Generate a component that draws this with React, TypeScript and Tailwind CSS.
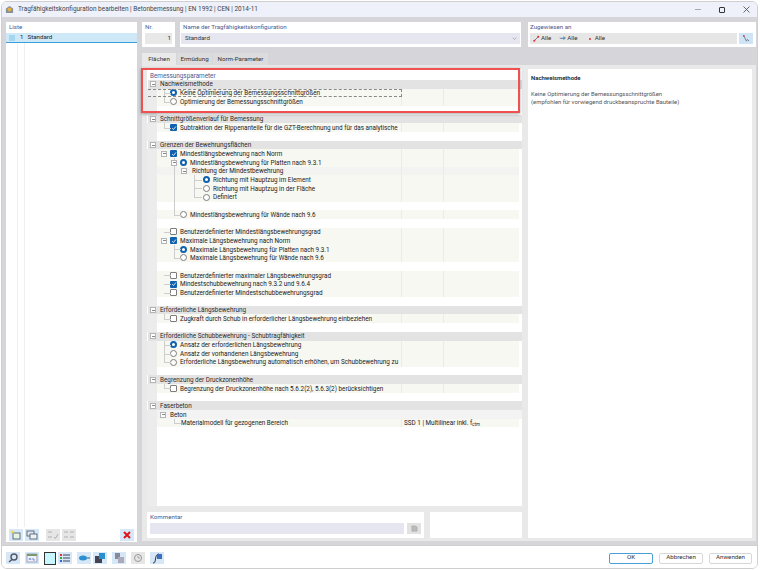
import type { ReactNode } from "react";

const V163 = "absolute left-[17px] top-0 bottom-0 w-px bg-[#cdcdcd]";
const V163Half = "absolute left-[17px] top-0 h-1/2 w-px bg-[#cdcdcd]";
const H163 = "absolute left-[17px] top-1/2 w-[7px] h-px bg-[#cdcdcd]";
const V173 = "absolute left-[27px] top-0 bottom-0 w-px bg-[#cdcdcd]";
const V173Half = "absolute left-[27px] top-0 h-1/2 w-px bg-[#cdcdcd]";
const H173 = "absolute left-[27px] top-1/2 w-[7px] h-px bg-[#cdcdcd]";
const V193 = "absolute left-[47px] top-0 bottom-0 w-px bg-[#cdcdcd]";
const V193Half = "absolute left-[47px] top-0 h-1/2 w-px bg-[#cdcdcd]";
const H193 = "absolute left-[47px] top-1/2 w-[8px] h-px bg-[#cdcdcd]";

const L1 = "pl-[13px]";
const L2 = "pl-[23px]";
const L3 = "pl-[35px]";
const L4 = "pl-[46px]";

function Radio({ on }: { on?: boolean }) {
  return on ? (
    <span className="mr-[3px] block size-[7px] shrink-0 rounded-full border-[2px] border-[#0f62b0] bg-white" />
  ) : (
    <span className="mr-[3px] block size-[7px] shrink-0 rounded-full border border-[#7d7d7d] bg-white" />
  );
}

function Check({ on }: { on?: boolean }) {
  return on ? (
    <span className="mr-[3px] flex size-[7px] shrink-0 items-center justify-center rounded-[1px] bg-[#0f62b0]">
      <svg viewBox="0 0 8 8" className="size-[6px]" fill="none" stroke="#fff" strokeWidth="1.1">
        <path d="M1.5 4.2 3.3 6 6.5 2" />
      </svg>
    </span>
  ) : (
    <span className="mr-[3px] block size-[7px] shrink-0 rounded-[1px] border border-[#7d7d7d] bg-white" />
  );
}

function Expander({ pos }: { pos: string }) {
  return (
    <span className={`absolute top-[1.5px] flex size-[6px] items-center justify-center border border-[#b4b4b4] bg-white ${pos}`}>
      <span className="block h-px w-[3px] bg-[#888]" />
    </span>
  );
}

function Section({ text, blue }: { text: string; blue?: boolean }) {
  if (blue) {
    return (
      <div className="flex h-[8.7px] items-center bg-white pl-[3px] text-[#4a5b8f]">
        <span className="translate-y-[0.8px]">{text}</span>
      </div>
    );
  }
  return (
    <div className="relative ml-[1px] flex h-[8.7px] items-center bg-[#e3e3e3] pl-[12px] text-[#2b2b2b]">
      <Expander pos="left-[2px]" />
      <span className="translate-y-[0.8px]">{text}</span>
    </div>
  );
}

function Spacer() {
  return (
    <div className="flex h-[8.7px]">
      <div className="w-[10px] bg-[#ececec]" />
    </div>
  );
}

function Row({
  indent,
  ctrl,
  text,
  value,
  tint,
  lines = [],
  exp,
  focus,
}: {
  indent: string;
  ctrl?: ReactNode;
  text: ReactNode;
  value?: ReactNode;
  tint?: boolean;
  lines?: string[];
  exp?: string;
  focus?: boolean;
}) {
  const bg = tint ? "bg-[#f3f3f1]" : "bg-[#f8f8f2]";
  return (
    <div className="relative flex h-[8.7px] text-[#222]">
      <div className="w-[10px] shrink-0 bg-[#ececec]" />
      <div className={`flex w-[244px] shrink-0 items-center whitespace-nowrap ${indent} ${bg}`}>
        {ctrl}
        <span className="translate-y-[0.8px]">{text}</span>
      </div>
      <div className={`flex w-[42px] shrink-0 items-center border-l border-[#ecece6] pl-[2px] ${bg}`}>
        {value}
      </div>
      <div className={`w-[76px] shrink-0 border-l border-[#ecece6] ${bg}`} />
      {lines.map((c) => (
        <span key={c} className={c} />
      ))}
      {exp && <Expander pos={exp} />}
      {focus && (
        <span className="absolute left-[1px] top-0 bottom-0 w-[254px] border-y border-r border-dashed border-[#888]" />
      )}
    </div>
  );
}

function Tree() {
  return (
    <div className="flex h-[437px] w-[375px] shrink-0 flex-col overflow-hidden bg-white pt-[2.2px] text-[6.35px]">
      <Section blue text="Bemessungsparameter" />
      <Section text="Nachweismethode" />
      <Row focus indent={L1} ctrl={<Radio on />} text="Keine Optimierung der Bemessungsschnittgrößen" lines={[V163, H163]} />
      <Row indent={L1} ctrl={<Radio />} text="Optimierung der Bemessungsschnittgrößen" lines={[V163Half, H163]} />
      <Spacer />
      <Section text="Schnittgrößenverlauf für Bemessung" />
      <Row indent={L1} ctrl={<Check on />} text="Subtraktion der Rippenanteile für die GZT-Berechnung und für das analytische" lines={[V163Half, H163]} />
      <Spacer />
      <Section text="Grenzen der Bewehrungsflächen" />
      <Row indent={L1} ctrl={<Check on />} text="Mindestlängsbewehrung nach Norm" exp="left-[14px]" />
      <Row indent={L2} ctrl={<Radio on />} text="Mindestlängsbewehrung für Platten nach 9.3.1" lines={[V173]} exp="left-[24px]" />
      <Row tint indent={L3} text="Richtung der Mindestbewehrung" lines={[V173]} exp="left-[34px]" />
      <Row indent={L4} ctrl={<Radio on />} text="Richtung mit Hauptzug im Element" lines={[V173, V193, H193]} />
      <Row indent={L4} ctrl={<Radio />} text="Richtung mit Hauptzug in der Fläche" lines={[V173, V193, H193]} />
      <Row indent={L4} ctrl={<Radio />} text="Definiert" lines={[V173, V193Half, H193]} />
      <div className="relative flex h-[8.7px]">
        <div className="w-[10px] bg-[#ececec]" />
        <span className={V173} />
      </div>
      <Row indent={L2} ctrl={<Radio />} text="Mindestlängsbewehrung für Wände nach 9.6" lines={[V173Half, H173]} />
      <Spacer />
      <Row indent={L1} ctrl={<Check />} text="Benutzerdefinierter Mindestlängsbewehrungsgrad" lines={[H163]} />
      <Row indent={L1} ctrl={<Check on />} text="Maximale Längsbewehrung nach Norm" exp="left-[14px]" />
      <Row indent={L2} ctrl={<Radio on />} text="Maximale Längsbewehrung für Platten nach 9.3.1" lines={[V173, H173]} />
      <Row indent={L2} ctrl={<Radio />} text="Maximale Längsbewehrung für Wände nach 9.6" lines={[V173Half, H173]} />
      <Spacer />
      <Row indent={L1} ctrl={<Check />} text="Benutzerdefinierter maximaler Längsbewehrungsgrad" lines={[H163]} />
      <Row indent={L1} ctrl={<Check on />} text="Mindestschubbewehrung nach 9.3.2 und 9.6.4" lines={[H163]} />
      <Row indent={L1} ctrl={<Check />} text="Benutzerdefinierter Mindestschubbewehrungsgrad" lines={[H163]} />
      <Spacer />
      <Section text="Erforderliche Längsbewehrung" />
      <Row indent={L1} ctrl={<Check />} text="Zugkraft durch Schub in erforderlicher Längsbewehrung einbeziehen" lines={[V163Half, H163]} />
      <Spacer />
      <Section text="Erforderliche Schubbewehrung - Schubtragfähigkeit" />
      <Row indent={L1} ctrl={<Radio on />} text="Ansatz der erforderlichen Längsbewehrung" lines={[V163, H163]} />
      <Row indent={L1} ctrl={<Radio />} text="Ansatz der vorhandenen Längsbewehrung" lines={[V163, H163]} />
      <Row indent={L1} ctrl={<Radio />} text="Erforderliche Längsbewehrung automatisch erhöhen, um Schubbewehrung zu" lines={[V163Half, H163]} />
      <Spacer />
      <Section text="Begrenzung der Druckzonenhöhe" />
      <Row indent={L1} ctrl={<Check />} text="Begrenzung der Druckzonenhöhe nach 5.6.2(2), 5.6.3(2) berücksichtigen" lines={[V163Half, H163]} />
      <Spacer />
      <Section text="Faserbeton" />
      <div className="relative flex h-[8.7px] text-[#222]">
        <div className="w-[10px] shrink-0 bg-[#ececec]" />
        <div className="flex flex-1 items-center bg-[#f3f3f3] pl-[13px]">
          <span className="translate-y-[0.8px]">Beton</span>
        </div>
        <Expander pos="left-[13px]" />
      </div>
      <Row
        indent="pl-[24px]"
        text="Materialmodell für gezogenen Bereich"
        value={
          <span className="relative z-10 translate-y-[0.8px] whitespace-nowrap">
            SSD 1 | Multilinear inkl. f<span className="align-[-1px] text-[4.5px]">ctm</span>
          </span>
        }
        lines={[V173Half, H173]}
      />
      <div className="flex flex-1">
        <div className="w-[10px] bg-[#ececec]" />
      </div>
    </div>
  );
}

function ToolBtn({ children, gray }: { children: ReactNode; gray?: boolean }) {
  return (
    <span className={gray ? "flex h-[12px] w-[14px] items-center justify-center bg-[#e6e6e6]" : "flex h-[12px] w-[14px] items-center justify-center bg-[#d6e8f7]"}>
      <svg viewBox="0 0 14 12" className="h-[12px] w-[14px]">
        {children}
      </svg>
    </span>
  );
}

export default function App() {
  return (
    <div className="h-[570px] w-[760px] bg-white p-[1px] font-['Roboto',sans-serif] text-[6.2px] text-[#333]">
      <div className="flex h-[568px] w-[757px] flex-col overflow-hidden rounded-[6px] border border-[#cfcfcf]">
        {/* title bar */}
        <div className="flex h-[15px] shrink-0 items-center bg-[#eef1f9] pl-[3px]">
          <svg viewBox="0 0 10 10" className="size-[9px]">
            <path d="M1 4 5 1l4 3v5H1z" fill="#8a8f98" />
            <circle cx="5" cy="5" r="2.2" fill="#e2b33c" />
          </svg>
          <span className="ml-[4px] text-[6.45px] text-[#444]">
            Tragfähigkeitskonfiguration bearbeiten | Betonbemessung | EN 1992 | CEN | 2014-11
          </span>
          <span className="ml-auto flex items-center gap-[18px] pr-[7px]">
            <span className="block h-px w-[6px] bg-[#aaa]" />
            <span className="block size-[6px] rounded-[1px] border border-[#333]" />
            <svg viewBox="0 0 7 7" className="size-[7px]" fill="none" stroke="#444" strokeWidth="0.8">
              <path d="M.5.5l6 6M6.5.5l-6 6" />
            </svg>
          </span>
        </div>

        {/* body */}
        <div className="flex h-[528px] shrink-0 gap-[5px] bg-[#d6d6da] pl-[4px] pr-[3px] pt-[5px]">
          {/* list */}
          <div className="flex h-[520px] w-[131px] shrink-0 flex-col bg-white">
            <div className="px-[3px] pt-[1px] text-[#4a5b8f]">Liste</div>
            <div className="mt-[1px] flex h-[10px] items-center border-b border-[#39a0d8] bg-[#cfe8f8] pl-[3px]">
              <span className="block size-[6px] bg-[#a5d8f0]" />
              <span className="ml-[5px] text-[#222]">1</span>
              <span className="ml-[4px] text-[#222]">Standard</span>
            </div>
            <div className="ml-[11px] flex-1 border-l border-[#efefef] pl-[6px]">
              <div className="h-full border-l border-[#efefef]" />
            </div>
            <div className="flex h-[15px] items-center gap-[2px] pl-[3px] pr-[3px]">
              <ToolBtn>
                <rect x="4" y="4" width="7" height="6" fill="#e8f2e0" stroke="#456" strokeWidth=".8" />
                <path d="M3 1l1 1.5L5.5 2 4.5 3.5 5 5 3.5 4 2 5l.5-1.5L1 2.5l1.5-.3z" fill="#f4d83a" />
              </ToolBtn>
              <ToolBtn>
                <rect x="2" y="2" width="7" height="5" fill="#dfe8f2" stroke="#456" strokeWidth=".8" />
                <rect x="5" y="5" width="7" height="5" fill="#eef2f6" stroke="#456" strokeWidth=".8" />
              </ToolBtn>
              <span className="w-[3px]" />
              <ToolBtn gray>
                <path d="M2 3h4M2 8h4M8 8l1.5 1.5L12 5" stroke="#aaa" fill="none" strokeWidth=".9" />
              </ToolBtn>
              <ToolBtn gray>
                <path d="M2 3h4M2 8h4M8 3h4M8 8h4" stroke="#aaa" fill="none" strokeWidth=".9" />
              </ToolBtn>
              <span className="ml-auto">
                <ToolBtn>
                  <path d="M4 3l6 6M10 3l-6 6" stroke="#e0141c" fill="none" strokeWidth="2" />
                </ToolBtn>
              </span>
            </div>
          </div>

          {/* right side */}
          <div className="flex w-[614px] shrink-0 flex-col">
            <div className="flex h-[25px] shrink-0">
              <div className="w-[33px] bg-white px-[3px] pt-[1px] text-[#4a5b8f]">
                Nr.
                <div className="mt-[1px] flex h-[11px] w-[27px] items-center justify-end bg-[#e8e8e8] pr-[1px] text-[#333]">1</div>
              </div>
              <div className="ml-[5px] w-[341px] bg-white px-[1px] pt-[1px] text-[#4a5b8f]">
                <span className="pl-[2px]">Name der Tragfähigkeitskonfiguration</span>
                <div className="mt-[1px] flex h-[11px] items-center justify-between bg-[#e6e6f0] pl-[4px] pr-[3px] text-[#333]">
                  Standard
                  <svg viewBox="0 0 8 5" className="h-[3px] w-[5px]" fill="none" stroke="#888" strokeWidth="1">
                    <path d="M1 1l3 3 3-3" />
                  </svg>
                </div>
              </div>
              <div className="ml-[7px] w-[228px] bg-white px-[2px] pt-[1px] text-[#4a5b8f]">
                Zugewiesen an
                <div className="mt-[1px] flex h-[11px] gap-[2px]">
                  <div className="flex w-[207px] items-center gap-[8px] bg-[#e6e6e6] pl-[3px] text-[#333]">
                    <span className="flex items-center gap-[1px]">
                      <svg viewBox="0 0 8 8" className="size-[7px]" fill="none">
                        <path d="M1 7l5-5" stroke="#667" strokeWidth="1" />
                        <circle cx="1.5" cy="6.5" r="1.2" fill="#d33" />
                        <circle cx="6" cy="2" r="1.2" fill="#d33" />
                      </svg>
                      Alle
                    </span>
                    <span className="flex items-center gap-[1px]">
                      <svg viewBox="0 0 8 8" className="size-[7px]">
                        <path d="M0 3h5V1l3 2.5L5 6V4.5H2z" fill="#6b8fb0" />
                      </svg>
                      Alle
                    </span>
                    <span className="flex items-center gap-[4px]">
                      <span className="ml-[3px] block size-[2px] rounded-full bg-[#d33]" />
                      Alle
                    </span>
                  </div>
                  <div className="flex w-[14px] items-center justify-center bg-[#cfe5f7]">
                    <svg viewBox="0 0 10 10" className="size-[9px]" fill="none">
                      <path d="M2 2l3 6 1-2 2 2" stroke="#777" strokeWidth="1" />
                      <circle cx="2" cy="2" r="1" fill="#d33" />
                    </svg>
                  </div>
                </div>
              </div>
            </div>

            {/* tabs */}
            <div className="mt-[6px] flex h-[12px] shrink-0 items-end gap-[1px]">
              <span className="flex h-[12px] w-[34px] items-center justify-center bg-[#e9e9e9] pt-[1px]">Flächen</span>
              <span className="flex h-[12px] w-[35px] items-center justify-center bg-[#dcdcdf] pt-[1px]">Ermüdung</span>
              <span className="flex h-[12px] w-[55px] items-center justify-center bg-[#dcdcdf] pt-[1px]">Norm-Parameter</span>
            </div>

            {/* main panel */}
            <div className="relative flex h-[476px] shrink-0 bg-[#e9e9e9] pl-[5px] pt-[4px]">
              <div className="flex w-[381px] shrink-0 flex-col">
                <Tree />
                <div className="mt-[6px] flex h-[26px] shrink-0">
                  <div className="w-[277px] bg-white px-[3px] pt-[1px] text-[#4a5b8f]">
                    Kommentar
                    <div className="mt-[1px] flex h-[11px] gap-[3px]">
                      <div className="w-[255px] bg-[#e6e6f0]" />
                      <div className="flex w-[14px] items-center justify-center bg-[#e2e2e2]">
                        <svg viewBox="0 0 8 8" className="size-[7px]">
                          <path d="M1 1h4.5L7 2.5V7H1z" fill="#bbb" stroke="#999" strokeWidth=".5" />
                        </svg>
                      </div>
                    </div>
                  </div>
                  <div className="ml-[6px] w-[92px] bg-white" />
                </div>
              </div>
              <div className="h-[469px] w-[224px] shrink-0 bg-white px-[3px] pt-[5px] text-[5.95px] text-[#555]">
                <div className="font-semibold text-[#222]">Nachweismethode</div>
                <div className="mt-[7px] leading-[8.5px]">Keine Optimierung der Bemessungsschnittgrößen</div>
                <div className="leading-[8.5px]">(empfohlen für vorwiegend druckbeanspruchte Bauteile)</div>
              </div>

              {/* red highlight */}
              <div className="absolute left-[-1px] top-[3px] h-[45px] w-[379px] border-2 border-solid border-[#f0504f] shadow-[0_1px_3px_rgba(0,0,0,0.35)]" />
            </div>
          </div>
        </div>

        {/* footer */}
        <div className="flex flex-1 items-center border-t border-[#cfcfcf] bg-white pl-[4px] pr-[5px] pt-[2px]">
          <div className="flex items-center gap-[5px]">
            <ToolBtn>
              <circle cx="8" cy="5" r="3" fill="none" stroke="#556" strokeWidth="1.4" />
              <path d="M6 7.5 3 10" stroke="#556" strokeWidth="1.5" />
            </ToolBtn>
            <ToolBtn>
              <rect x="2" y="2" width="10" height="8" fill="#eef" stroke="#778" strokeWidth=".6" />
              <rect x="2" y="2" width="10" height="2" fill="#7a9a6a" />
              <path d="M4 8l1-2 1 2M8 6v2h2" stroke="#47a" fill="none" strokeWidth=".7" />
            </ToolBtn>
            <span className="block h-[13px] w-[12px] border border-[#333] bg-[#c8f6ff]" />
            <span className="-ml-[3px]">
              <ToolBtn>
                <path d="M5 3h7M5 6h7M5 9h7" stroke="#445" strokeWidth="1" />
                <rect x="2" y="2" width="2" height="2" fill="#d33" />
                <rect x="2" y="5" width="2" height="2" fill="#3a3" />
                <rect x="2" y="8" width="2" height="2" fill="#36c" />
              </ToolBtn>
            </span>
            <ToolBtn>
              <ellipse cx="6" cy="6" rx="4" ry="2.5" fill="#2a8fd0" />
              <path d="M10 6h3" stroke="#556" strokeWidth="1" />
            </ToolBtn>
            <span className="-ml-[3px]">
              <ToolBtn>
                <rect x="2" y="4" width="7" height="7" fill="#445" />
                <rect x="6" y="1" width="6" height="6" fill="#2a8fd0" />
              </ToolBtn>
            </span>
            <ToolBtn>
              <rect x="3" y="1" width="5" height="6" fill="#889" />
              <rect x="6" y="5" width="6" height="6" fill="#aab" />
            </ToolBtn>
            <ToolBtn gray>
              <circle cx="7" cy="6" r="3.5" fill="none" stroke="#999" strokeWidth="1" />
              <path d="M7 4v2h2" stroke="#999" fill="none" strokeWidth=".8" />
            </ToolBtn>
            <ToolBtn>
              <path d="M3 11c2 0 2-1 2.5-4S6.5 2 9 2" stroke="#334" fill="none" strokeWidth="1" />
              <rect x="7" y="2" width="5" height="5" fill="#3a6fc0" />
            </ToolBtn>
          </div>
          <div className="ml-auto flex gap-[6px] text-[#333]">
            <span className="flex h-[11px] w-[44px] items-center justify-center rounded-[2px] border border-[#4a9fd8] bg-white">OK</span>
            <span className="flex h-[11px] w-[44px] items-center justify-center rounded-[2px] border border-[#d8d8d8] bg-white">Abbrechen</span>
            <span className="flex h-[11px] w-[43px] items-center justify-center rounded-[2px] border border-[#d8d8d8] bg-white">Anwenden</span>
          </div>
        </div>
      </div>
    </div>
  );
}
